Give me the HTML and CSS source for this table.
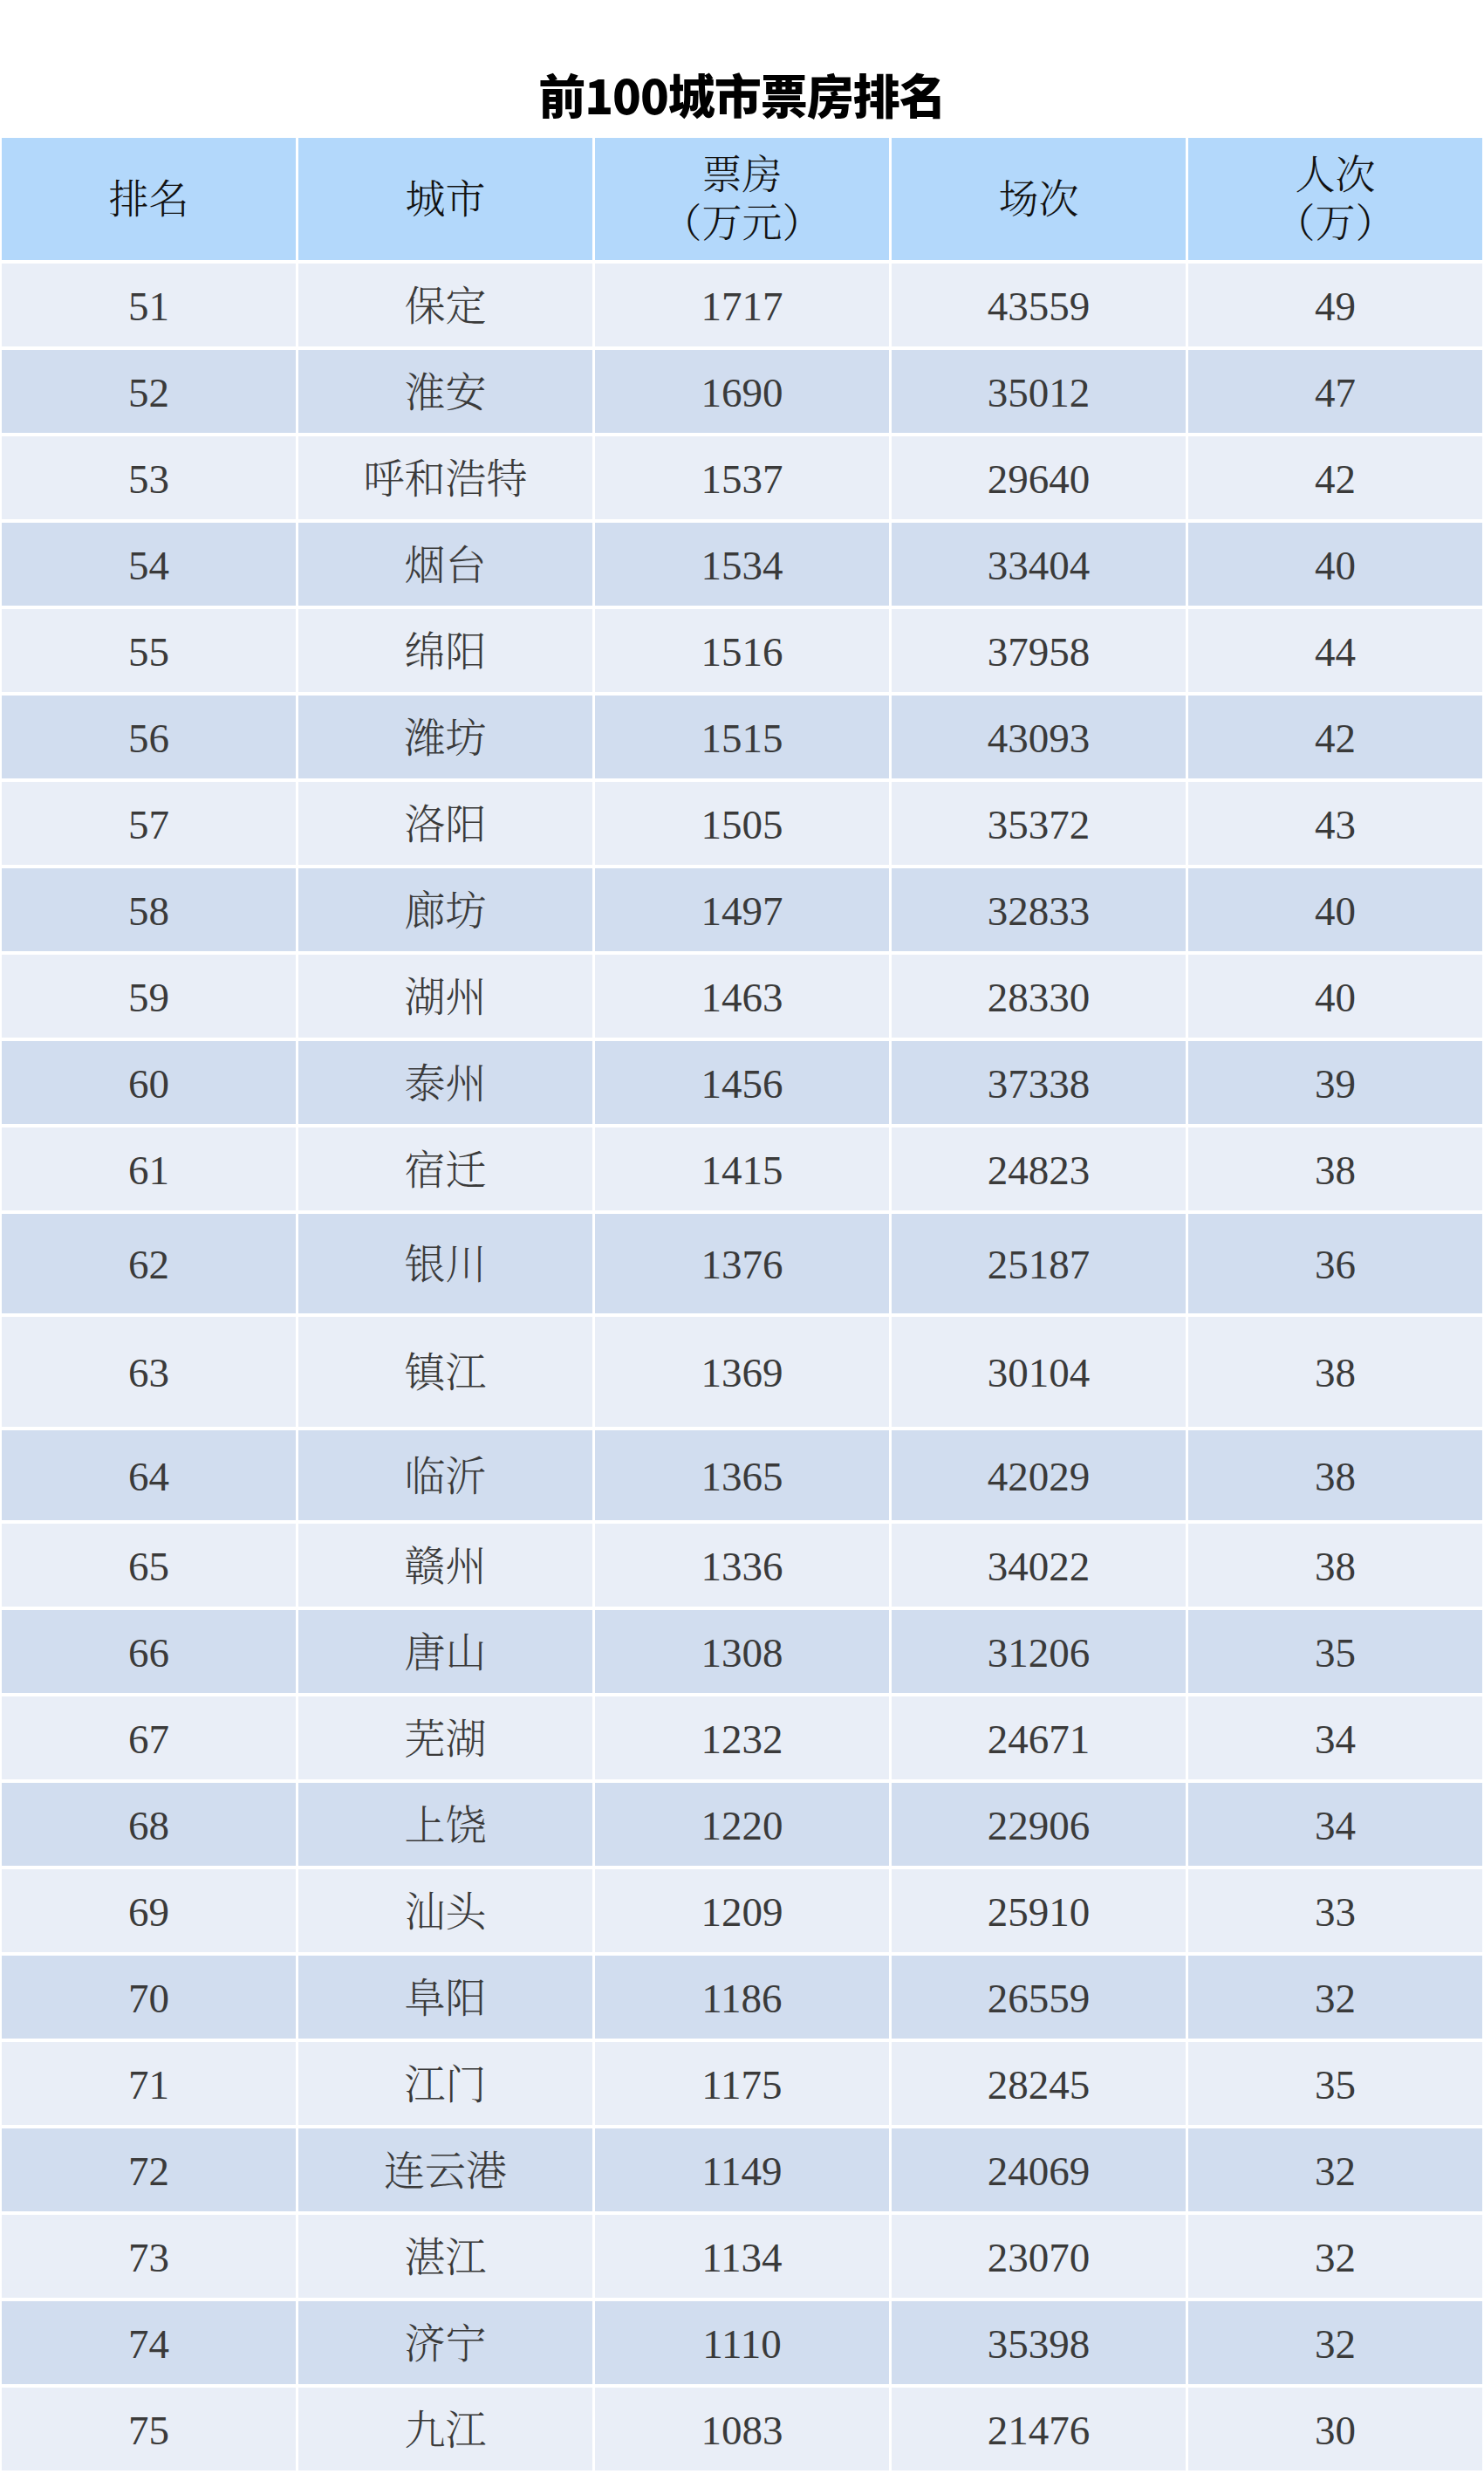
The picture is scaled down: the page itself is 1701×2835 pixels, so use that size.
FILE: index.html
```html
<!DOCTYPE html>
<html lang="zh-CN">
<head>
<meta charset="utf-8">
<title>前100城市票房排名</title>
<link rel="stylesheet" href="styles.css">
</head>
<body>
<div class="page">
  <h1 class="title">前100城市票房排名</h1>
  <div class="table">
    <div class="row head">
      <div class="cell">排名</div>
      <div class="cell">城市</div>
      <div class="cell">票房<br>（万元）</div>
      <div class="cell">场次</div>
      <div class="cell">人次<br>（万）</div>
    </div>
    <div class="row odd"><div class="cell">51</div><div class="cell">保定</div><div class="cell">1717</div><div class="cell">43559</div><div class="cell">49</div></div>
    <div class="row even"><div class="cell">52</div><div class="cell">淮安</div><div class="cell">1690</div><div class="cell">35012</div><div class="cell">47</div></div>
    <div class="row odd"><div class="cell">53</div><div class="cell">呼和浩特</div><div class="cell">1537</div><div class="cell">29640</div><div class="cell">42</div></div>
    <div class="row even"><div class="cell">54</div><div class="cell">烟台</div><div class="cell">1534</div><div class="cell">33404</div><div class="cell">40</div></div>
    <div class="row odd"><div class="cell">55</div><div class="cell">绵阳</div><div class="cell">1516</div><div class="cell">37958</div><div class="cell">44</div></div>
    <div class="row even"><div class="cell">56</div><div class="cell">潍坊</div><div class="cell">1515</div><div class="cell">43093</div><div class="cell">42</div></div>
    <div class="row odd"><div class="cell">57</div><div class="cell">洛阳</div><div class="cell">1505</div><div class="cell">35372</div><div class="cell">43</div></div>
    <div class="row even"><div class="cell">58</div><div class="cell">廊坊</div><div class="cell">1497</div><div class="cell">32833</div><div class="cell">40</div></div>
    <div class="row odd"><div class="cell">59</div><div class="cell">湖州</div><div class="cell">1463</div><div class="cell">28330</div><div class="cell">40</div></div>
    <div class="row even"><div class="cell">60</div><div class="cell">泰州</div><div class="cell">1456</div><div class="cell">37338</div><div class="cell">39</div></div>
    <div class="row odd"><div class="cell">61</div><div class="cell">宿迁</div><div class="cell">1415</div><div class="cell">24823</div><div class="cell">38</div></div>
    <div class="row even h114"><div class="cell">62</div><div class="cell">银川</div><div class="cell">1376</div><div class="cell">25187</div><div class="cell">36</div></div>
    <div class="row odd h126"><div class="cell">63</div><div class="cell">镇江</div><div class="cell">1369</div><div class="cell">30104</div><div class="cell">38</div></div>
    <div class="row even h103"><div class="cell">64</div><div class="cell">临沂</div><div class="cell">1365</div><div class="cell">42029</div><div class="cell">38</div></div>
    <div class="row odd"><div class="cell">65</div><div class="cell">赣州</div><div class="cell">1336</div><div class="cell">34022</div><div class="cell">38</div></div>
    <div class="row even"><div class="cell">66</div><div class="cell">唐山</div><div class="cell">1308</div><div class="cell">31206</div><div class="cell">35</div></div>
    <div class="row odd"><div class="cell">67</div><div class="cell">芜湖</div><div class="cell">1232</div><div class="cell">24671</div><div class="cell">34</div></div>
    <div class="row even"><div class="cell">68</div><div class="cell">上饶</div><div class="cell">1220</div><div class="cell">22906</div><div class="cell">34</div></div>
    <div class="row odd"><div class="cell">69</div><div class="cell">汕头</div><div class="cell">1209</div><div class="cell">25910</div><div class="cell">33</div></div>
    <div class="row even"><div class="cell">70</div><div class="cell">阜阳</div><div class="cell">1186</div><div class="cell">26559</div><div class="cell">32</div></div>
    <div class="row odd"><div class="cell">71</div><div class="cell">江门</div><div class="cell">1175</div><div class="cell">28245</div><div class="cell">35</div></div>
    <div class="row even"><div class="cell">72</div><div class="cell">连云港</div><div class="cell">1149</div><div class="cell">24069</div><div class="cell">32</div></div>
    <div class="row odd"><div class="cell">73</div><div class="cell">湛江</div><div class="cell">1134</div><div class="cell">23070</div><div class="cell">32</div></div>
    <div class="row even"><div class="cell">74</div><div class="cell">济宁</div><div class="cell">1110</div><div class="cell">35398</div><div class="cell">32</div></div>
    <div class="row odd"><div class="cell">75</div><div class="cell">九江</div><div class="cell">1083</div><div class="cell">21476</div><div class="cell">30</div></div>
  </div>
</div>
</body>
</html>
```

FILE: styles.css
```css
html, body {
  margin: 0;
  padding: 0;
  background: #ffffff;
}

.page {
  width: 1701px;
  height: 2835px;
  box-sizing: border-box;
  padding: 0 2px 3px 2px;
}

.title {
  margin: 0;
  height: 158px;
  box-sizing: border-box;
  padding-top: 58px;
  display: flex;
  align-items: center;
  justify-content: center;
  font-family: "Noto Sans CJK SC", "Noto Sans", sans-serif;
  font-weight: 900;
  font-size: 54px;
  line-height: 1;
  color: #000000;
  letter-spacing: -1px;
}

.table {
  display: flex;
  flex-direction: column;
  gap: 4px;
}

.row {
  display: grid;
  grid-template-columns: repeat(5, 1fr);
  column-gap: 3px;
  height: 95px;
}

.row.head {
  height: 140px;
}

.row.h114 { height: 114px; }
.row.h126 { height: 126px; }
.row.h103 { height: 103px; }

.cell {
  display: flex;
  align-items: center;
  justify-content: center;
  text-align: center;
  box-sizing: border-box;
  padding-top: 3px;
  font-family: "Liberation Serif", "Noto Serif CJK SC", "Source Han Serif SC", "Noto Sans CJK SC", serif;
  font-weight: 300;
  font-size: 47px;
  line-height: 55px;
  color: #3a3a3a;
}

.head .cell {
  background: #b3d8fb;
  color: #111111;
  font-size: 46px;
  padding-top: 0;
}

.odd .cell {
  background: #e9eef7;
}

.even .cell {
  background: #d1ddef;
}
```
